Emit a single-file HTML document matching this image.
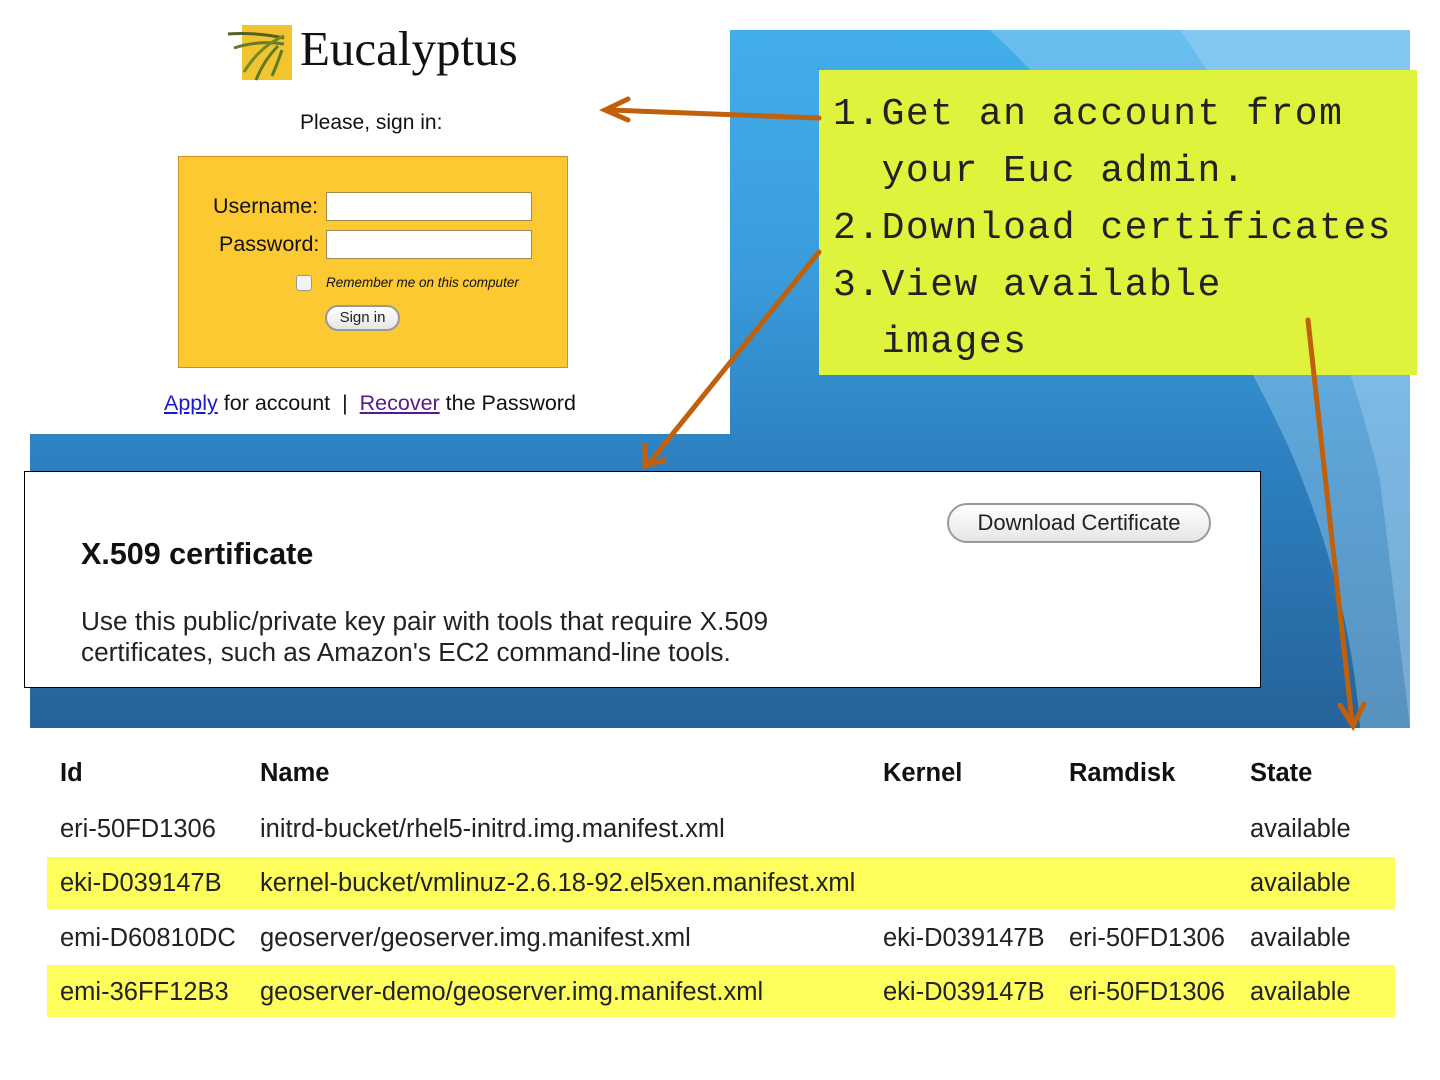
<!DOCTYPE html>
<html><head><meta charset="utf-8">
<style>
*{margin:0;padding:0;box-sizing:border-box}
body{width:1440px;height:1080px;position:relative;background:#fff;overflow:hidden;font-family:"Liberation Sans",Arial,sans-serif;color:#111}
.a{position:absolute;white-space:nowrap}
#bg{left:30px;top:30px;width:1380px;height:698px;background:linear-gradient(180deg,#42aeea 0%,#3a9bdb 35%,#2d80c0 62%,#25639a 100%);overflow:hidden}
#login{left:0;top:0;width:730px;height:434px;background:#fff}
#cert{left:24px;top:471px;width:1237px;height:217px;background:#fff;border:1px solid #000}
#note{left:819px;top:70px;width:598px;height:305px;background:#dff23c;font-family:"Liberation Mono",monospace;font-size:38px;letter-spacing:1.5px;line-height:57px;color:#222;padding:16px 0 0 14px;white-space:pre}
.btn{border:2px solid #999;border-radius:20px;background:linear-gradient(#fff,#e6e6e6);color:#222;text-align:center}
.row{left:47px;width:1348px;height:52px;background:#fdfd5c}
.t{font-size:25.5px;color:#222;top:0}
.h{font-size:25.5px;font-weight:bold;color:#111}
</style></head><body>
<div id="bg" class="a">
  <svg width="1380" height="698" style="position:absolute;left:0;top:0">
    <path d="M960 0 Q1150 180 1260 420 Q1320 560 1330 698 L1380 698 L1380 0 Z" fill="#a6d6f4" opacity="0.4"/>
    <path d="M1150 0 Q1290 200 1350 450 L1380 698 L1380 0 Z" fill="#c0e2f8" opacity="0.3"/>
  </svg>
</div>
<div id="login" class="a">
  <svg class="a" style="left:226px;top:24px" width="70" height="60">
    <rect x="16" y="1" width="50" height="55" fill="#f2c530"/>
    <path d="M2 10 Q30 8 58 14" stroke="#4f6420" stroke-width="3" fill="none"/>
    <path d="M8 24 Q32 16 58 20" stroke="#667a25" stroke-width="3" fill="none"/>
    <path d="M18 48 Q34 22 58 12" stroke="#6f8a2a" stroke-width="3" fill="none"/>
    <path d="M30 56 Q38 36 52 22" stroke="#5d7a22" stroke-width="3" fill="none"/>
    <path d="M46 52 Q52 38 56 26" stroke="#5d7a22" stroke-width="3" fill="none"/>
  </svg>
  <div class="a" style="left:300px;top:20px;font-family:'Liberation Serif',serif;font-size:49px;color:#111">Eucalyptus</div>
  <div class="a" style="left:300px;top:111px;font-size:21px">Please, sign in:</div>
  <div class="a" style="left:178px;top:156px;width:390px;height:212px;background:#fcc933;border:1px solid #d09020"></div>
  <div class="a" style="left:213px;top:194px;font-size:21.5px">Username:</div>
  <div class="a" style="left:219px;top:232px;font-size:21.5px">Password:</div>
  <div class="a" style="left:326px;top:192px;width:206px;height:29px;background:#fff;border:1px solid #a08a50"></div>
  <div class="a" style="left:326px;top:230px;width:206px;height:29px;background:#fff;border:1px solid #a08a50"></div>
  <div class="a" style="left:296px;top:275px;width:16px;height:16px;background:#f4f4f4;border:1px solid #999;border-radius:3px"></div>
  <div class="a" style="left:326px;top:275px;font-size:13.5px;font-style:italic">Remember me on this computer</div>
  <div class="a btn" style="left:325px;top:305px;width:75px;height:26px;font-size:15px;line-height:22px">Sign in</div>
  <div class="a" style="left:164px;top:391px;font-size:21.5px;white-space:pre"><span style="color:#1a1acc;text-decoration:underline">Apply</span> for account  |  <span style="color:#551a8b;text-decoration:underline">Recover</span> the Password</div>
</div>
<div id="cert" class="a">
  <div class="a" style="left:56px;top:65px;font-size:30.5px;font-weight:bold">X.509 certificate</div>
  <div class="a" style="left:56px;top:134px;font-size:26.2px;line-height:31px;color:#222">Use this public/private key pair with tools that require X.509<br>certificates, such as Amazon's EC2 command-line tools.</div>
  <div class="a btn" style="left:922px;top:31px;width:264px;height:40px;font-size:22px;line-height:35px">Download Certificate</div>
</div>
<div id="note" class="a">1.Get an account from
  your Euc admin.
2.Download certificates
3.View available
  images</div>
<svg class="a" style="left:0;top:0" width="1440" height="1080">
  <g stroke="#c0600a" stroke-width="5" fill="none" stroke-linecap="round">
    <path d="M819 118 L610 110"/><path d="M628 99 L605 110 L628 120"/>
    <path d="M819 252 L650 462"/><path d="M645 445 L645 466 L664 460"/>
    <path d="M1308 320 L1352 722"/><path d="M1340 705 L1353 726 L1364 704"/>
  </g>
</svg>
<div class="a row" style="top:857px"></div>
<div class="a row" style="top:965px"></div>
<div class="a h" style="left:60px;top:759px">Id</div>
<div class="a h" style="left:260px;top:759px">Name</div>
<div class="a h" style="left:883px;top:759px">Kernel</div>
<div class="a h" style="left:1069px;top:759px">Ramdisk</div>
<div class="a h" style="left:1250px;top:759px">State</div>
<div class="a t" style="left:60px;top:815px">eri-50FD1306</div>
<div class="a t" style="left:260px;top:815px">initrd-bucket/rhel5-initrd.img.manifest.xml</div>
<div class="a t" style="left:1250px;top:815px">available</div>
<div class="a t" style="left:60px;top:869px">eki-D039147B</div>
<div class="a t" style="left:260px;top:869px">kernel-bucket/vmlinuz-2.6.18-92.el5xen.manifest.xml</div>
<div class="a t" style="left:1250px;top:869px">available</div>
<div class="a t" style="left:60px;top:924px">emi-D60810DC</div>
<div class="a t" style="left:260px;top:924px">geoserver/geoserver.img.manifest.xml</div>
<div class="a t" style="left:883px;top:924px">eki-D039147B</div>
<div class="a t" style="left:1069px;top:924px">eri-50FD1306</div>
<div class="a t" style="left:1250px;top:924px">available</div>
<div class="a t" style="left:60px;top:978px">emi-36FF12B3</div>
<div class="a t" style="left:260px;top:978px">geoserver-demo/geoserver.img.manifest.xml</div>
<div class="a t" style="left:883px;top:978px">eki-D039147B</div>
<div class="a t" style="left:1069px;top:978px">eri-50FD1306</div>
<div class="a t" style="left:1250px;top:978px">available</div>
</body></html>
